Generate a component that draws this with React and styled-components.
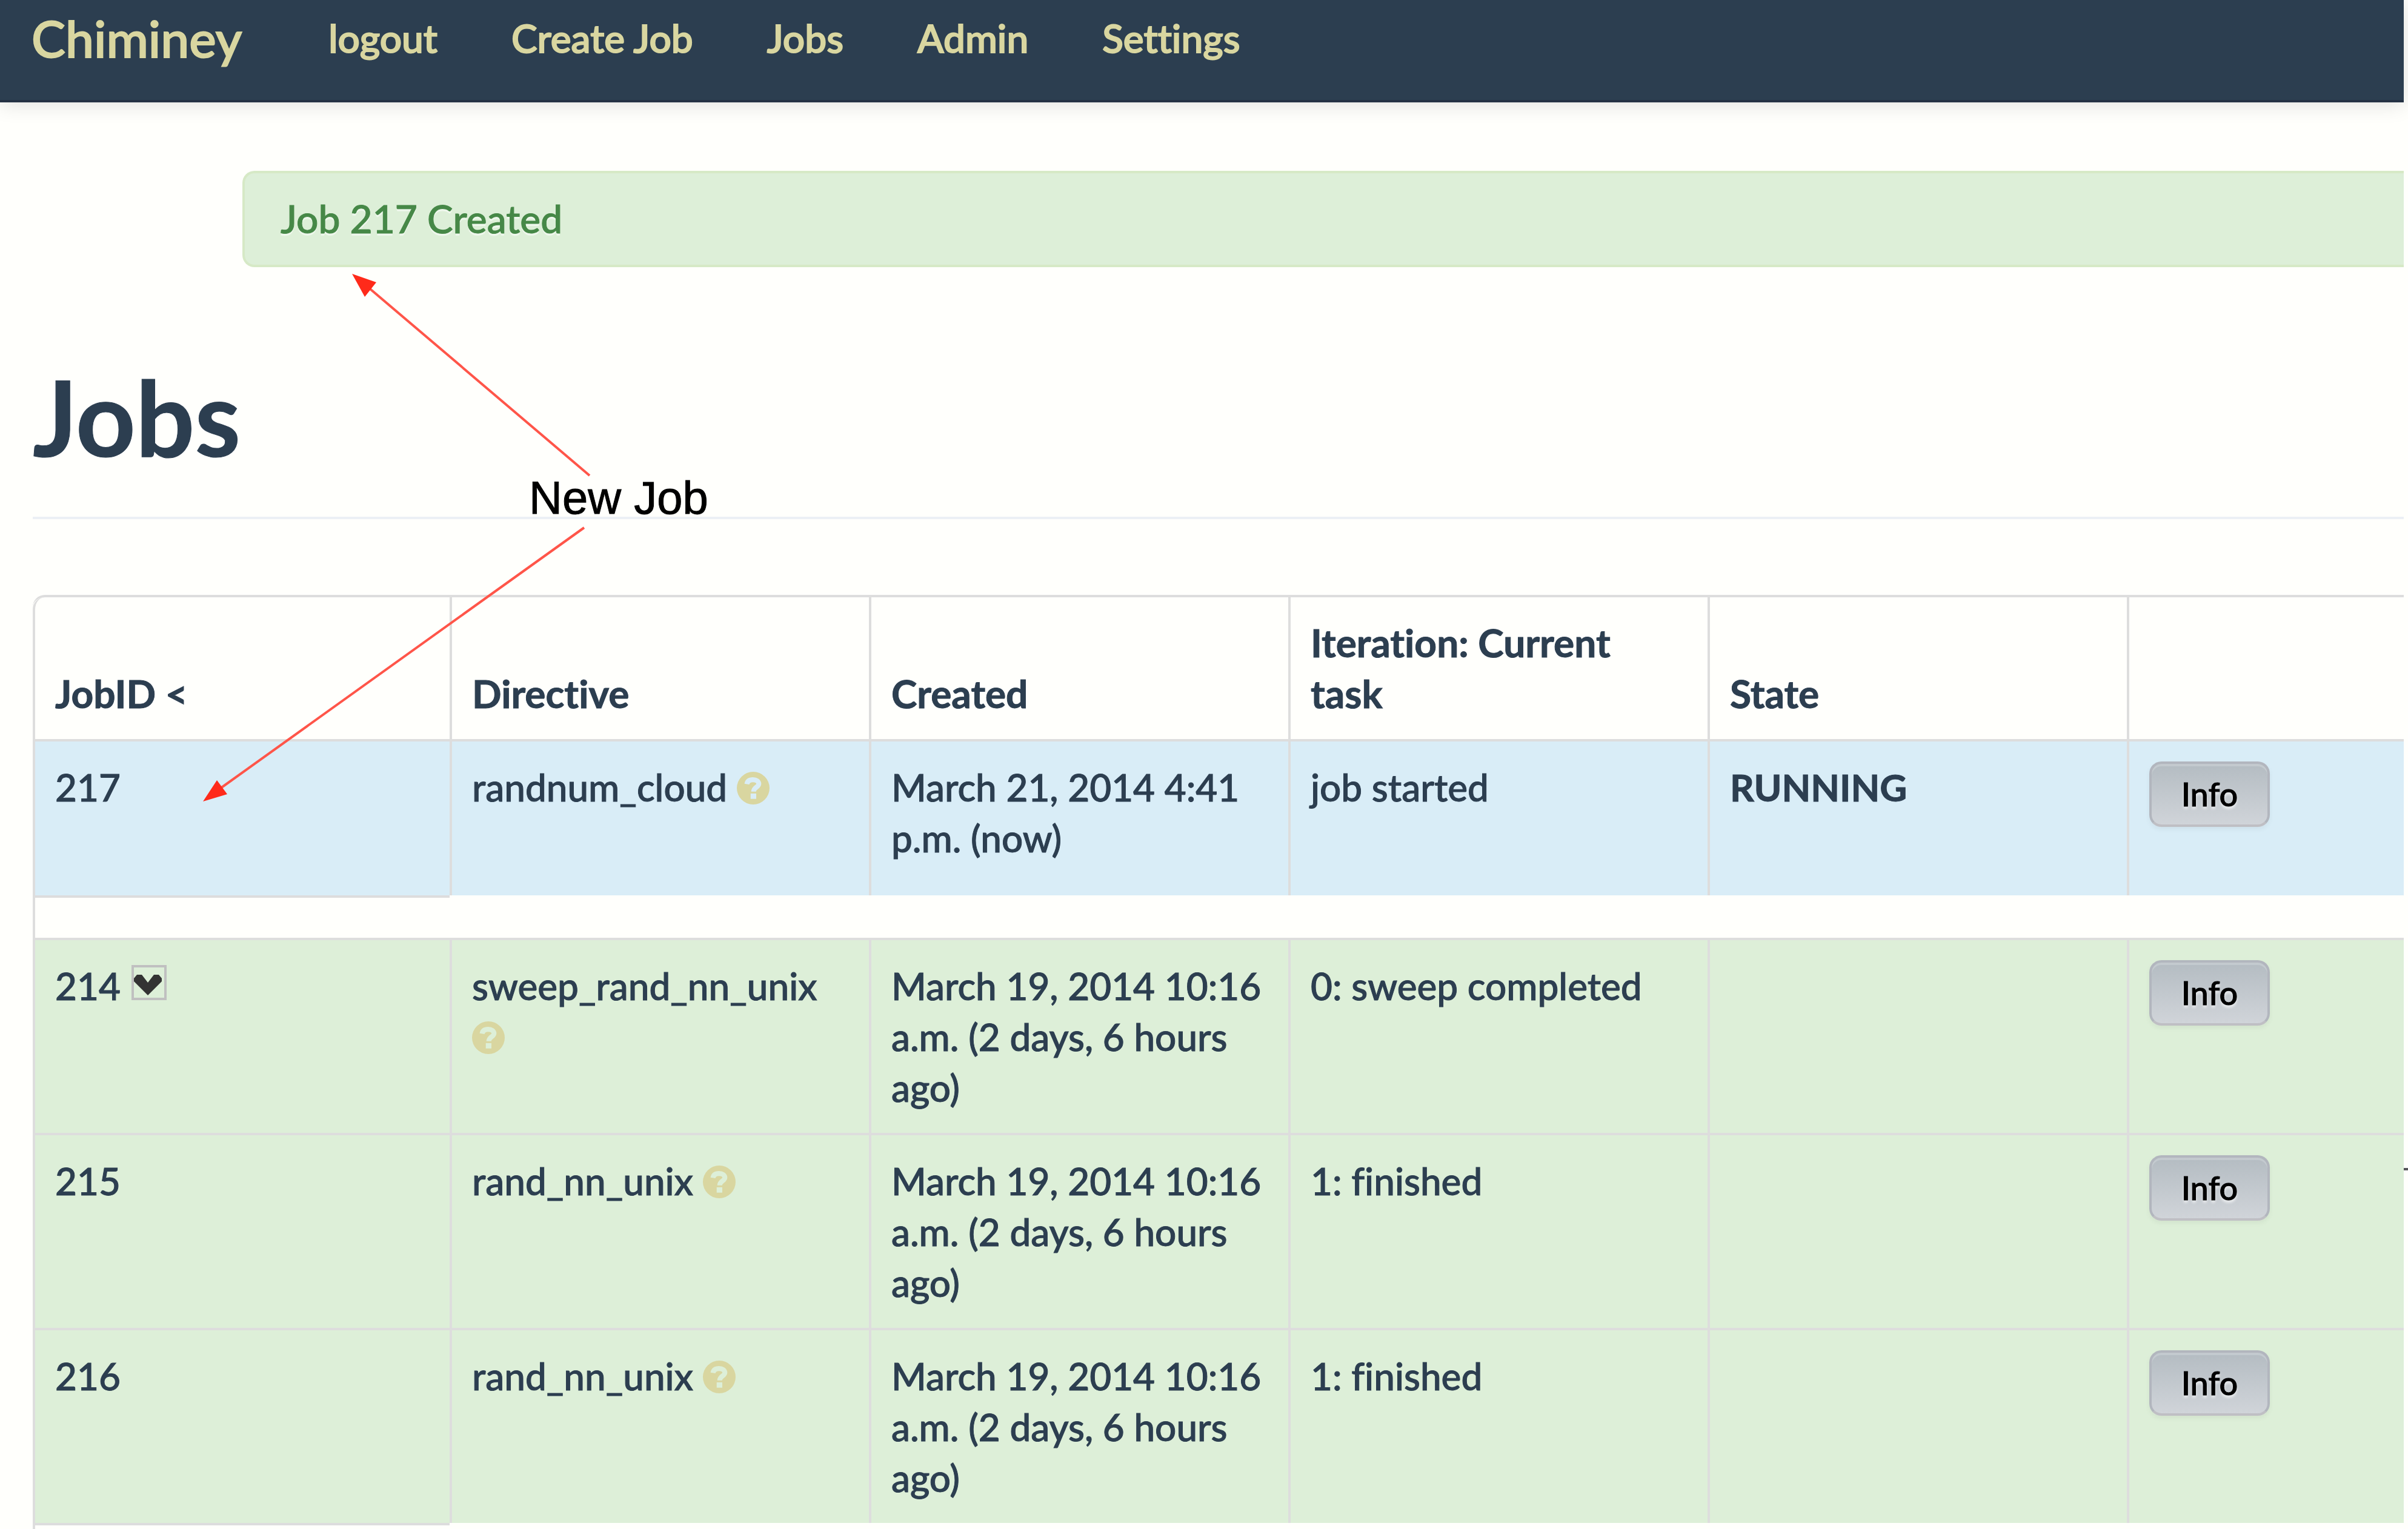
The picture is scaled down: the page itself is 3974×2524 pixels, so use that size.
import React from "react";
import styled, { createGlobalStyle, css } from "styled-components";

const line = "#dddddd";
const ink = "#2c3e50";
const sand = "#d9d6a0";

const GlobalStyle = createGlobalStyle`
  *, *::before, *::after { box-sizing: border-box; }
  html { background: #fffffc; }
  body {
    margin: 0;
    overflow: hidden;
    background: #fffffc;
    color: ${ink};
    font-family: Lato, "Liberation Sans", sans-serif;
    font-size: 62px;
    font-weight: 500;
    font-variant-ligatures: none;
    line-height: 84px;
    -webkit-text-stroke: 1px currentColor;
  }
`;

const Page = styled.div`
  position: relative;
  padding-right: 7px;
`;

const Navbar = styled.nav`
  display: flex;
  align-items: flex-start;
  height: 169px;
  padding: 21px 0 0 52px;
  background: ${ink};
  border-bottom: 4px solid #253244;
  box-shadow: 0 4px 32px rgba(0, 0, 0, 0.12);
  -webkit-text-stroke: 2px currentColor;
`;

const Brand = styled.a`
  margin-right: 82px;
  color: ${sand};
  font-size: 84px;
  text-decoration: none;
`;

const NavLink = styled.a`
  padding: 0 61px;
  color: ${sand};
  font-size: 64px;
  text-decoration: none;
`;

const Alert = styled.div`
  margin: 113px 0 0 400px;
  padding: 33px 59px;
  height: 159px;
  background: #ddefd8;
  border: 4px solid #d6e9c6;
  border-right: 0;
  border-radius: 20px 0 0 20px;
  color: #468847;
  font-size: 64px;
  text-shadow: 0 4px 0 rgba(255, 255, 255, 0.5);
`;

const Main = styled.main`
  margin-left: 54px;
`;

const PageHeader = styled.header`
  padding: 163px 0 81px;
  border-bottom: 4px solid #ecf0f5;
`;

const Title = styled.h1`
  margin: 0;
  font-size: 172px;
  font-weight: 700;
  line-height: 168px;
`;

const JobTable = styled.table`
  width: 100%;
  margin-top: 125px;
  table-layout: fixed;
  border-collapse: separate;
  border-spacing: 0;
  border-top: 4px solid ${line};
  border-radius: 20px 0 0 0;
`;

const Column = styled.col`
  width: ${(p) => p.$width};
`;

const cell = css`
  padding: 33px;
  border-left: 4px solid ${line};
  text-align: left;
`;

const HeadCell = styled.th`
  ${cell}
  padding-right: 62px;
  font-size: 64px;
  font-weight: 700;
  vertical-align: bottom;
  &:first-child { border-top-left-radius: 20px; }
`;

const tones = { info: "#d9edf7", success: "#ddefd8" };

const Row = styled.tr`
  background: ${(p) => tones[p.$tone]};
`;

const Cell = styled.td`
  ${cell}
  padding-right: 20px;
  border-top: 4px solid ${line};
  vertical-align: top;
`;

const State = styled.strong`
  font-weight: 700;
`;

const SpacerStart = styled.td`
  ${cell}
  border-top: 4px solid ${line};
`;

const SpacerRest = styled.td`
  padding: 0;
`;

const HelpLink = styled.a`
  display: inline-block;
  width: 54px;
  height: 54px;
  vertical-align: -5px;
  color: ${sand};
`;

const Glyph = styled.svg`
  display: block;
  width: 100%;
  height: 100%;
`;

const Toggle = styled.button`
  display: inline-block;
  width: 58px;
  height: 58px;
  margin-left: 18px;
  padding: 0;
  vertical-align: 4px;
  background: transparent;
  border: 4px solid #c0c0c0;
`;

const ActionForm = styled.form`
  margin: 0 0 80px;
`;

const InfoButton = styled.button`
  display: block;
  width: 199px;
  height: 108px;
  padding: 0;
  color: #000;
  font-family: Lato, "Liberation Sans", sans-serif;
  font-size: 54px;
  font-weight: 500;
  line-height: 84px;
  text-shadow: 0 4px 4px rgba(255, 255, 255, 0.75);
  background: linear-gradient(#b4bcc2, #d0d4d9);
  border: 4px solid #b2b6be;
  border-bottom-color: #bfbfc4;
  border-radius: 20px;
  box-shadow: inset 0 4px 0 rgba(255, 255, 255, 0.2), 0 4px 8px rgba(0, 0, 0, 0.05);
`;

const Annotation = styled.div`
  position: absolute;
  top: 0;
  left: 0;
  pointer-events: none;
`;

const Arrows = styled.svg`
  display: block;
`;

const Note = styled.span`
  position: absolute;
  left: 873px;
  top: 780px;
  color: #000;
  font-family: "Liberation Sans", Arial, sans-serif;
  font-size: 76px;
  font-weight: 400;
  white-space: nowrap;
`;

const EdgeMark = styled.div`
  position: absolute;
  right: 0;
  top: 1928px;
  width: 7px;
  height: 4px;
  background: #55555a;
`;

function Help({ name, tone }) {
  return (
    <HelpLink href="#help" aria-label={`About ${name}`}>
      <Glyph viewBox="0 0 14 14">
        <circle cx="7" cy="7" r="7" fill="currentColor" />
        <path
          d="M4.300 5.300C4.500 4 5.500 3.400 6.900 3.400c1.500 0 2.500 0.700 2.500 1.800 0 1.400-2.200 1.400-2.200 3.300"
          fill="none"
          stroke={tones[tone]}
          strokeWidth="2.100"
        />
        <rect x="5.900" y="9.300" width="2.400" height="2.300" fill={tones[tone]} />
      </Glyph>
    </HelpLink>
  );
}

function Expand() {
  return (
    <Toggle type="button" aria-label="Show sub-jobs">
      <Glyph viewBox="0 0 50 50">
        <path d="M0 18L5 12H13L23 25L33 12H41L46 18V23L23 46L0 23Z" fill="#333" />
      </Glyph>
    </Toggle>
  );
}

const links = ["logout", "Create Job", "Jobs", "Admin", "Settings"];
const old = "March 19, 2014 10:16 a.m. (2 days, 6 hours ago)";
const groups = [
  [{ id: "217", directive: "randnum_cloud", created: "March 21, 2014 4:41 p.m. (now)", task: "job started", state: "RUNNING", tone: "info" }],
  [
    { id: "214", parent: true, directive: "sweep_rand_nn_unix", created: old, task: "0: sweep completed", tone: "success" },
    { id: "215", directive: "rand_nn_unix", created: old, task: "1: finished", tone: "success" },
    { id: "216", directive: "rand_nn_unix", created: old, task: "1: finished", tone: "success" },
  ],
];

function Job({ job }) {
  return (
    <Row $tone={job.tone}>
      <Cell>
        {job.id}
        {job.parent && <Expand />}
      </Cell>
      <Cell>
        {job.directive} <Help name={job.directive} tone={job.tone} />
      </Cell>
      <Cell>{job.created}</Cell>
      <Cell>{job.task}</Cell>
      <Cell>{job.state && <State>{job.state}</State>}</Cell>
      <Cell>
        <ActionForm>
          <InfoButton type="button">Info</InfoButton>
        </ActionForm>
      </Cell>
    </Row>
  );
}

export default function App() {
  return (
    <Page>
      <GlobalStyle />
      <Navbar>
        <Brand href="#home">Chiminey</Brand>
        {links.map((l) => (
          <NavLink key={l} href={`#${l}`}>{l}</NavLink>
        ))}
      </Navbar>
      <Alert role="status">Job 217 Created</Alert>
      <Main>
        <PageHeader>
          <Title>Jobs</Title>
        </PageHeader>
        <JobTable>
          <colgroup>
            <Column $width="688px" />
            <Column $width="692px" />
            <Column $width="692px" />
            <Column $width="692px" />
            <Column $width="692px" />
            <Column $width="auto" />
          </colgroup>
          <thead>
            <tr>
              <HeadCell>JobID &lt;</HeadCell>
              <HeadCell>Directive</HeadCell>
              <HeadCell>Created</HeadCell>
              <HeadCell>Iteration: Current task</HeadCell>
              <HeadCell>State</HeadCell>
              <HeadCell />
            </tr>
          </thead>
          {groups.map((jobs) => (
            <tbody key={jobs[0].id}>
              {jobs.map((job) => (
                <Job key={job.id} job={job} />
              ))}
              <tr>
                <SpacerStart />
                <SpacerRest colSpan={5} />
              </tr>
            </tbody>
          ))}
        </JobTable>
      </Main>
      <Annotation>
        <Arrows width="1200" height="1400" viewBox="0 0 1200 1400">
          <g stroke="#ff5549" strokeWidth="4">
            <path d="M973 785L605 472" />
            <path d="M964 871L360 1304" />
          </g>
          <g fill="#ff2a1a">
            <path d="M581 452L621 466L602 490Z" />
            <path d="M335 1323L358 1288L375 1311Z" />
          </g>
        </Arrows>
        <Note>New Job</Note>
      </Annotation>
      <EdgeMark />
    </Page>
  );
}
